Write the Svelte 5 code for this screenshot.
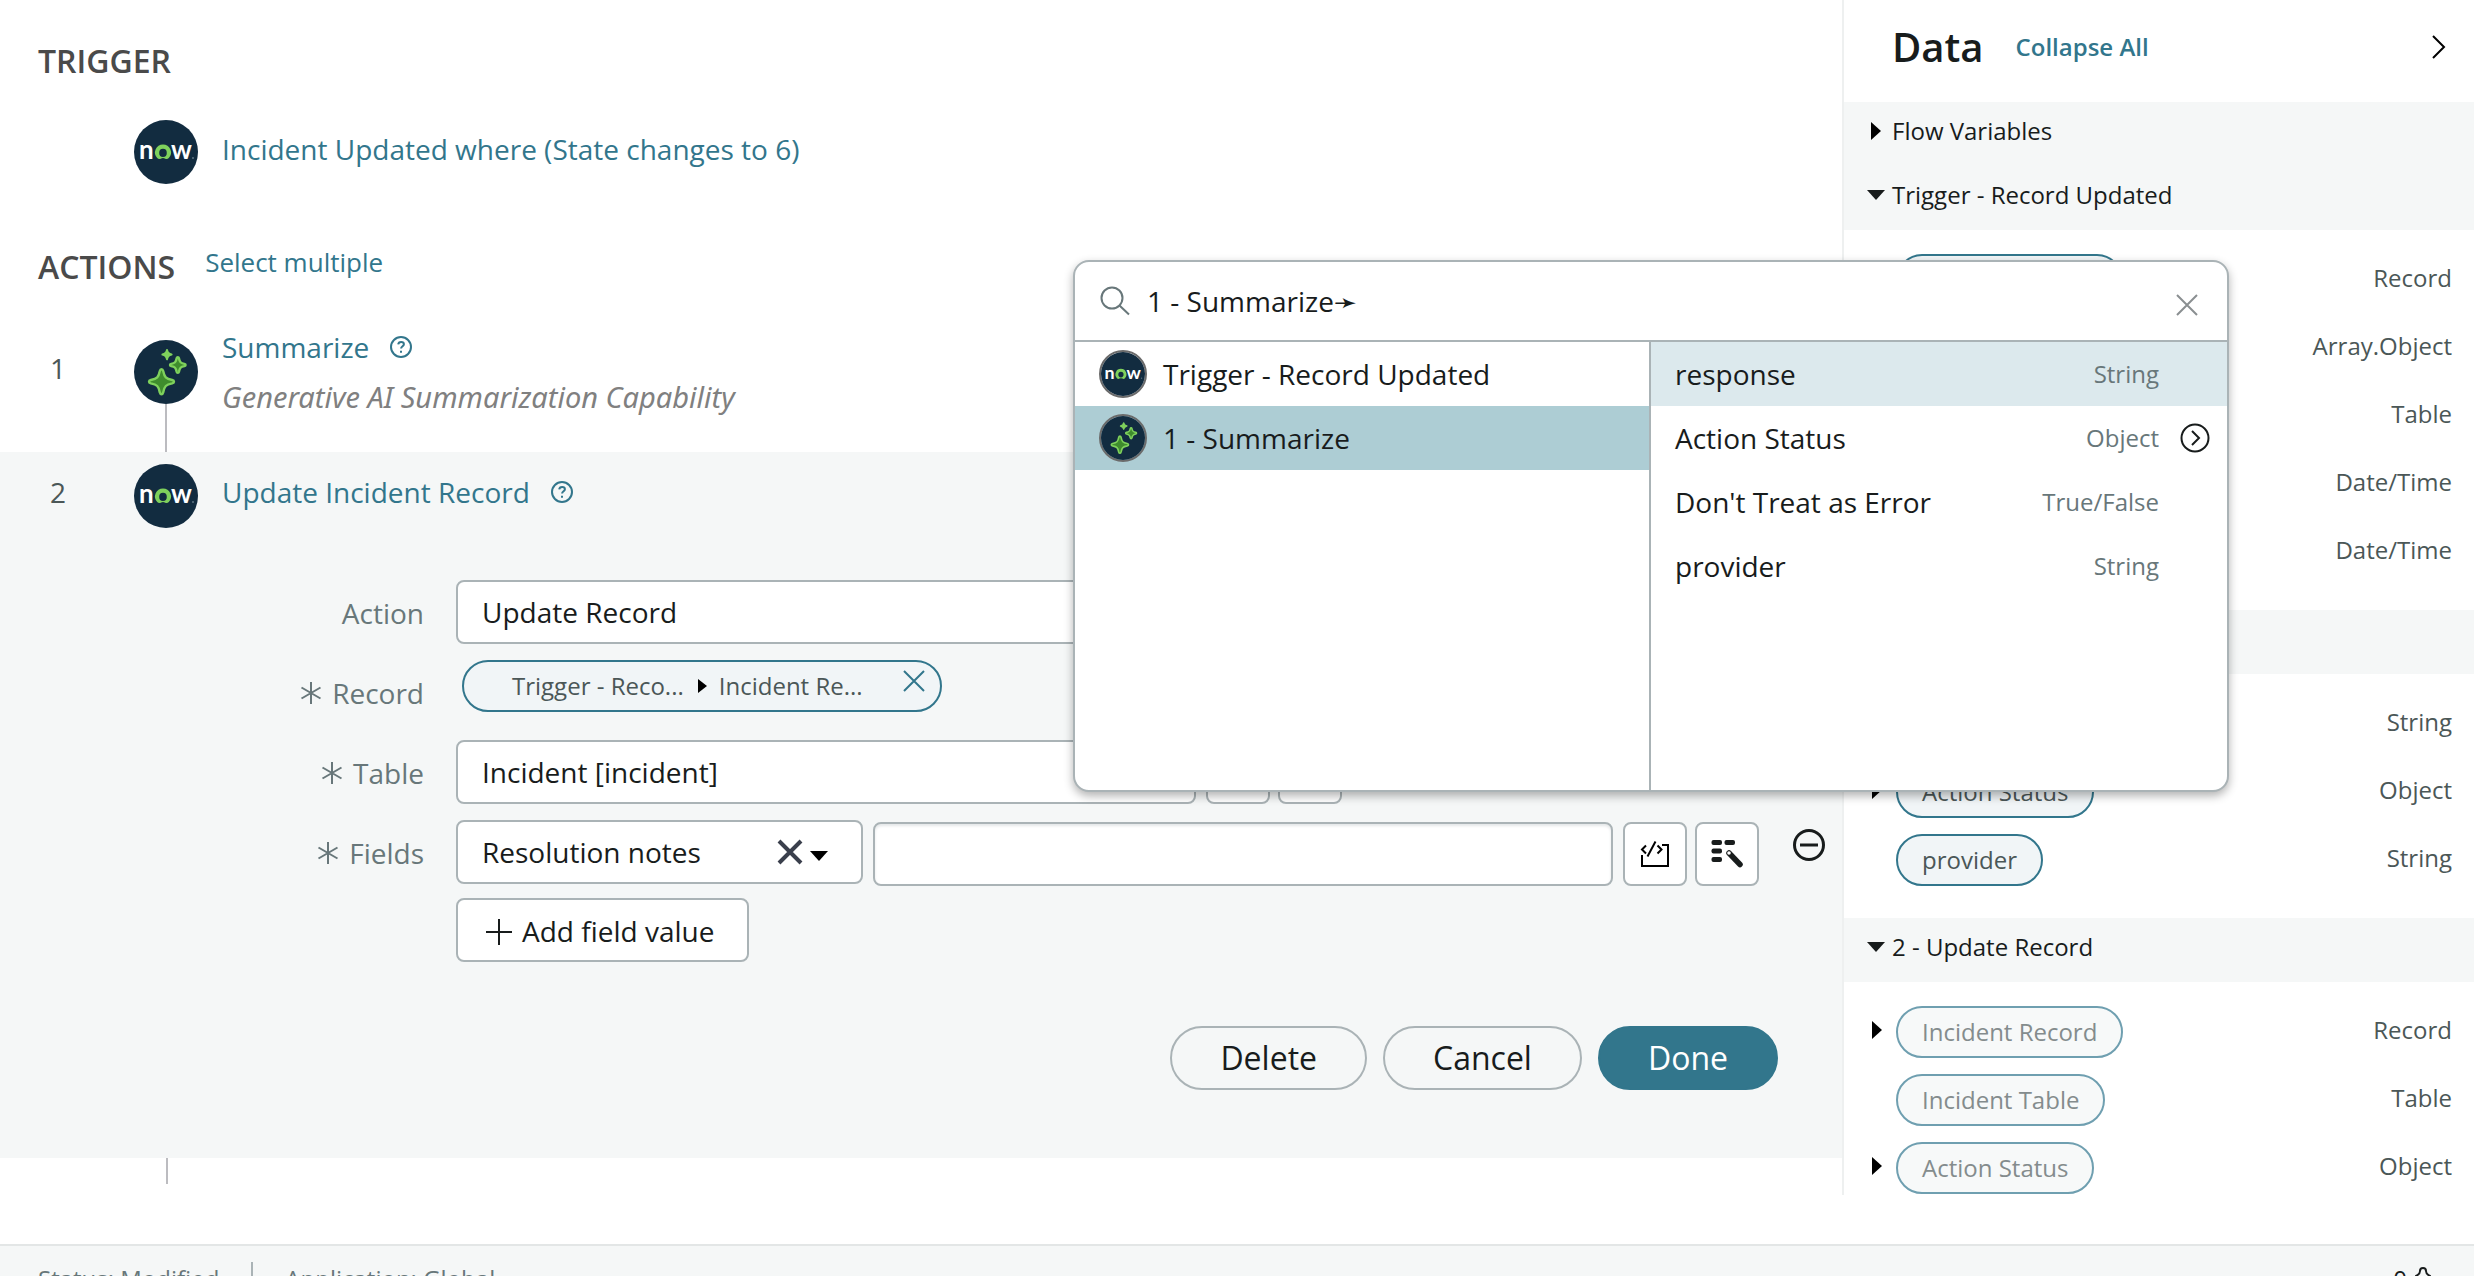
<script>
  const variables = [
    {
      title: 'Trigger - Record Updated',
      muted: false,
      items: [
        { name: 'Incident Record', type: 'Record', nested: true },
        { name: 'Changed Fields', type: 'Array.Object', nested: true },
        { name: 'Incident Table', type: 'Table', nested: false },
        { name: 'Run Start Time', type: 'Date/Time', nested: false },
        { name: 'Run Start Date', type: 'Date/Time', nested: false }
      ]
    },
    {
      title: '1 - Summarize',
      muted: false,
      items: [
        { name: 'response', type: 'String', nested: false },
        { name: 'Action Status', type: 'Object', nested: true },
        { name: 'provider', type: 'String', nested: false }
      ]
    },
    {
      title: '2 - Update Record',
      muted: true,
      items: [
        { name: 'Incident Record', type: 'Record', nested: true },
        { name: 'Incident Table', type: 'Table', nested: false },
        { name: 'Action Status', type: 'Object', nested: true }
      ]
    }
  ];

  const outputs = [
    { name: 'response', type: 'String' },
    { name: 'Action Status', type: 'Object', nested: true },
    { name: "Don't Treat as Error", type: 'True/False' },
    { name: 'provider', type: 'String' }
  ];

  let query = $state('1 - Summarize➛');
  let note = $state('');
</script>

{#snippet nowLogo()}
  <svg class="badge" viewBox="0 0 64 64" role="img" aria-label="now">
    <circle cx="32" cy="32" r="32" fill="#122c40" />
    <text class="logo-text" x="5" y="39">n</text>
    <path
      fill="#7fd15c"
      fill-rule="evenodd"
      d="M29 24.500a8 8 0 0 1 5.800 13.500q-1.500 1.800-3.600.7a4.500 4.500 0 0 0-4.400 0q-2.100 1.100-3.600-.7A8 8 0 0 1 29 24.500zm0 4.300a3.800 4.100 0 1 0 0 8.200a3.800 4.100 0 1 0 0-8.200z"
    />
    <text class="logo-text" x="37" y="39">w</text>
    <circle cx="59" cy="38" r="1" fill="#5f7483" />
  </svg>
{/snippet}

{#snippet sparkLogo()}
  <svg class="badge" viewBox="0 0 64 64" aria-hidden="true">
    <circle cx="32" cy="32" r="32" fill="#122c40" />
    <g fill="#3f8c2d" stroke="#7fd15c" stroke-width="2.400" stroke-linejoin="round">
      <path d="M27.500 29.200c1 0 1.400.6 1.700 1.800 1.300 6.400 2.600 7.700 9 9 1.200.3 1.800.7 1.800 1.700s-.6 1.400-1.800 1.700c-6.400 1.300-7.700 2.600-9 9-.3 1.200-.7 1.800-1.700 1.800s-1.400-.6-1.700-1.800c-1.300-6.400-2.600-7.700-9-9-1.200-.3-1.800-.7-1.800-1.700s.6-1.400 1.800-1.700c6.400-1.300 7.700-2.600 9-9 .3-1.200.7-1.800 1.700-1.800z" />
      <path d="M43.800 17.200c.7 0 1 .4 1.200 1.200.8 3.800 1.600 4.600 5.400 5.400.8.200 1.200.5 1.200 1.200s-.4 1-1.200 1.200c-3.800.8-4.600 1.600-5.400 5.400-.2.800-.5 1.200-1.200 1.200s-1-.4-1.200-1.200c-.8-3.800-1.600-4.600-5.400-5.400-.8-.2-1.200-.5-1.200-1.200s.4-1 1.200-1.200c3.800-.8 4.600-1.600 5.400-5.400.2-.8.500-1.200 1.200-1.200z" />
      <path fill="#7fd15c" stroke-width="2" d="M33 10c.5 2.800 1.500 3.900 4.600 4.600-3.100.7-4.100 1.800-4.600 4.600-.5-2.800-1.500-3.900-4.600-4.600 3.100-.7 4.100-1.800 4.600-4.600z" />
    </g>
  </svg>
{/snippet}

{#snippet help()}
  <button class="help" type="button" aria-label="Help">
    <svg width="24" height="24" viewBox="0 0 24 24" fill="none" stroke="currentColor" stroke-width="2">
      <circle cx="12" cy="12" r="10" />
      <path d="M9.200 9.400c.2-1.700 1.300-2.500 2.900-2.500 1.700 0 2.800.9 2.800 2.300 0 2.100-2.800 2.100-2.800 4.400" />
      <path d="M12 15.800v2" />
    </svg>
  </button>
{/snippet}

{#snippet star()}
  <svg class="star" width="22" height="22" viewBox="0 0 22 22" stroke="currentColor" stroke-width="2" aria-label="required">
    <path d="M11 0v22M1.500 5.500l19 11M1.500 16.500l19-11" />
  </svg>
{/snippet}

{#snippet cross(size)}
  <svg width={size} height={size} viewBox="0 0 22 22" stroke="currentColor" stroke-width="2" aria-hidden="true">
    <path d="M1 1l20 20M21 1L1 21" />
  </svg>
{/snippet}

{#snippet scriptIcon()}
  <svg width="60" height="60" viewBox="2 2 60 60" fill="none" stroke="#000" stroke-width="2" aria-hidden="true">
    <path d="M19 33v11h26v-21h-6" />
    <path d="M23 23.500l-4 4 4 4M34.500 23.500l4 4-4 4M32.500 19.500l-8 15" />
  </svg>
{/snippet}

{#snippet wandIcon()}
  <svg width="60" height="60" viewBox="2 2 60 60" fill="#181c1c" aria-hidden="true">
    <rect x="16.500" y="18" width="10.500" height="5" rx="2" />
    <rect x="29.500" y="18" width="10.500" height="5" rx="2" />
    <rect x="16.500" y="26.500" width="10.500" height="5" rx="2" />
    <rect x="16.500" y="35" width="10.500" height="5" rx="2" />
    <path d="M34 31l11 11.500" stroke="#181c1c" stroke-width="5.500" stroke-linecap="round" />
    <circle cx="34" cy="31" r="1.800" fill="#fff" />
  </svg>
{/snippet}

<div class="page">
  <div class="workspace">
    <main class="flow">
      <h2 class="heading">TRIGGER</h2>
      <div class="step trigger">
        <span class="num"></span>
        <div class="mark">{@render nowLogo()}</div>
        <div class="info"><a class="title" href="#trigger">Incident Updated where (State changes to 6)</a></div>
      </div>

      <div class="actions-head">
        <h2>ACTIONS</h2>
        <a href="#select">Select multiple</a>
      </div>

      <div class="step noted">
        <span class="num">1</span>
        <div class="mark">{@render sparkLogo()}<i class="line"></i></div>
        <div class="info">
          <div class="title-row"><a class="title" href="#summarize">Summarize</a>{@render help()}</div>
          <p class="note">Generative AI Summarization Capability</p>
        </div>
      </div>

      <section class="editor">
        <div class="step">
          <span class="num">2</span>
          <div class="mark">{@render nowLogo()}</div>
          <div class="info">
            <div class="title-row"><a class="title" href="#update">Update Incident Record</a>{@render help()}</div>
          </div>
        </div>

        <form class="form">
          <div class="row">
            <label for="action">Action</label>
            <select id="action" class="box wide"><option>Update Record</option></select>
          </div>
          <div class="row">
            <span class="label">{@render star()}Record</span>
            <div class="chip">
              <span>Trigger - Reco...</span>
              <svg width="9" height="14" viewBox="0 0 9 14" aria-hidden="true"><path d="M0 0l9 7-9 7z" /></svg>
              <span>Incident Re...</span>
              <button type="button" aria-label="Remove record">{@render cross(22)}</button>
            </div>
          </div>
          <div class="row">
            <label for="table">{@render star()}Table</label>
            <div class="controls">
              <select id="table" class="box wide"><option>Incident [incident]</option></select>
              <div class="tools">
                <button class="tool" type="button" aria-label="Script">{@render scriptIcon()}</button>
                <button class="tool" type="button" aria-label="Pick data">{@render wandIcon()}</button>
              </div>
            </div>
          </div>
          <div class="row">
            <label for="field">{@render star()}Fields</label>
            <div class="controls grow">
              <div class="field-pick">
                <select id="field" class="box"><option>Resolution notes</option></select>
                <button class="clear" type="button" aria-label="Clear field">
                  <svg width="26" height="26" viewBox="0 0 26 26" stroke="#3a3f4c" stroke-width="4"><path d="M2 2l22 22M24 2L2 24" /></svg>
                </button>
                <svg class="caret" width="18" height="10" viewBox="0 0 18 10" aria-hidden="true"><path d="M0 0h18l-9 10z" /></svg>
              </div>
              <input class="box value" aria-label="Field value" bind:value={note} />
              <div class="tools">
                <button class="tool" type="button" aria-label="Script">{@render scriptIcon()}</button>
                <button class="tool" type="button" aria-label="Pick data">{@render wandIcon()}</button>
              </div>
              <button class="remove" type="button" aria-label="Remove field">
                <svg width="32" height="32" viewBox="0 0 32 32" fill="none" stroke="#181c1c" stroke-width="3">
                  <circle cx="16" cy="16" r="14.500" /><path d="M7 16h18" />
                </svg>
              </button>
            </div>
          </div>
          <button class="box add" type="button">
            <svg width="26" height="28" viewBox="0 0 26 28" stroke="#181c1c" stroke-width="2" aria-hidden="true"><path d="M13 2v26M0 15h26" /></svg>
            Add field value
          </button>
          <div class="submit">
            <button class="pill" type="button">Delete</button>
            <button class="pill" type="button">Cancel</button>
            <button class="pill primary" type="button">Done</button>
          </div>
        </form>
      </section>
      <i class="line tail"></i>
    </main>

    <aside class="data">
      <header class="data-head">
        <h1>Data</h1>
        <a href="#collapse">Collapse All</a>
        <button type="button" aria-label="Hide panel">
          <svg width="14" height="24" viewBox="0 0 14 24" fill="none" stroke="#000" stroke-width="2"><path d="M1 1l11 11L1 23" /></svg>
        </button>
      </header>
      <button class="group" type="button">
        <span class="arrow"><svg width="10" height="18" viewBox="0 0 10 18"><path d="M0 0l10 9-10 9z" /></svg></span>
        Flow Variables
      </button>
      {#each variables as group}
        <button class="group" type="button">
          <span class="arrow"><svg width="18" height="10" viewBox="0 0 18 10"><path fill="#181c1c" d="M0 0h18l-9 10z" /></svg></span>
          {group.title}
        </button>
        <ul class="vars" class:muted={group.muted}>
          {#each group.items as item}
            <li>
              <span class="arrow">
                {#if item.nested}<svg width="10" height="18" viewBox="0 0 10 18"><path d="M0 0l10 9-10 9z" /></svg>{/if}
              </span>
              <span class="var">{item.name}</span>
              <span class="type">{item.type}</span>
            </li>
          {/each}
        </ul>
      {/each}
    </aside>

    <div class="picker" role="dialog" aria-label="Data picker">
      <div class="search">
        <svg width="30" height="30" viewBox="0 0 30 30" fill="none" stroke="#68777a" stroke-width="2" aria-hidden="true">
          <circle cx="12" cy="12" r="10.500" /><path d="M19.500 19.500l9.500 9" />
        </svg>
        <input aria-label="Search data" bind:value={query} />
        <button type="button" aria-label="Close">{@render cross(22)}</button>
      </div>
      <div class="columns">
        <div class="sources">
          <button type="button"><span class="mini">{@render nowLogo()}</span>Trigger - Record Updated</button>
          <button type="button" class="selected"><span class="mini">{@render sparkLogo()}</span>1 - Summarize</button>
        </div>
        <div class="outputs">
          {#each outputs as output, i}
            <button type="button" class:hovered={i === 0}>
              <span>{output.name}</span>
              <span class="kind">{output.type}</span>
              <span class="more">
                {#if output.nested}
                  <svg width="30" height="30" viewBox="0 0 30 30" fill="none" stroke="#181c1c" stroke-width="2">
                    <circle cx="15" cy="15" r="13.500" /><path d="M12 8l7 7-7 7" />
                  </svg>
                {/if}
              </span>
            </button>
          {/each}
        </div>
      </div>
    </div>
  </div>

  <footer class="status">
    <span>Status: Modified</span>
    <i></i>
    <span>Application: Global</span>
    <span class="count">
      0
      <svg width="16" height="24" viewBox="0 0 16 24" fill="none" stroke="#181c1c" stroke-width="2">
        <path d="M1 22V9q4-2 4-5a3 3 0 1 1 6 0q0 3 4 5v13z" />
      </svg>
    </span>
  </footer>
</div>

<style>
  :global(body) {
    background: #fff;
    overflow: hidden;
  }
  .page {
    height: 100vh;
    overflow: hidden;
    font-family: 'Open Sans', 'Noto Sans', 'DejaVu Sans', sans-serif;
    font-size: 28px;
    line-height: 40px;
    color: #181c1c;
  }
  .page *,
  .page *::before {
    box-sizing: border-box;
  }
  svg {
    display: block;
    flex: none;
  }
  h1,
  h2,
  p,
  ul {
    margin: 0;
    padding: 0;
  }
  button,
  input,
  select {
    font: inherit;
    color: inherit;
    margin: 0;
    padding: 0;
    border: 0;
    background: none;
    border-radius: 0;
    text-align: left;
  }
  a {
    color: #32768c;
    text-decoration: none;
  }
  .workspace {
    position: relative;
    display: flex;
    height: calc(100vh - 81px);
  }
  .flow {
    flex: 1;
    min-width: 0;
    padding-top: 39px;
    overflow: hidden;
  }
  h2 {
    font-size: 32px;
    line-height: 44px;
    font-weight: 600;
    color: #4a4a4a;
  }
  .heading {
    padding-left: 38px;
  }

  .step {
    display: flex;
  }
  .trigger {
    margin-top: 37px;
  }
  .num {
    width: 134px;
    padding: 8px 18px 0 0;
    text-align: center;
    color: #4b5757;
  }
  .mark {
    display: flex;
    flex-direction: column;
    align-items: center;
    width: 64px;
    margin-right: 24px;
  }
  .badge {
    width: 64px;
    height: 64px;
  }
  .logo-text {
    font-family: Lato, sans-serif;
    font-size: 26px;
    font-weight: 700;
    fill: #fff;
  }
  .info {
    padding-top: 8px;
  }
  .trigger .info {
    padding-top: 9px;
  }
  .title-row {
    display: flex;
    align-items: center;
    gap: 20px;
  }
  .help {
    color: #32768c;
  }
  .actions-head {
    display: flex;
    align-items: flex-start;
    gap: 30px;
    margin-top: 61px;
    padding-left: 38px;
  }
  .actions-head a {
    font-size: 26px;
    line-height: 34px;
  }
  .noted {
    margin-top: 38px;
  }
  .noted .num {
    padding-top: 21px;
  }
  .noted .mark {
    padding-top: 13px;
  }
  .noted .info {
    padding: 0 0 35px;
  }
  .note {
    margin-top: 10px;
    font-family: 'Noto Sans', 'Open Sans', sans-serif;
    font-size: 29px;
    font-style: italic;
    color: #808080;
  }
  .line {
    flex: 1;
    width: 2px;
    background: #bcbcc0;
  }
  .tail {
    display: block;
    height: 26px;
    margin-left: 166px;
  }

  .editor {
    padding: 12px 0 68px;
    background: #f5f7f7;
  }
  .form {
    display: flex;
    flex-direction: column;
    gap: 16px;
    margin-top: 52px;
  }
  .row {
    display: flex;
    align-items: flex-start;
    height: 64px;
  }
  .row > label,
  .label {
    display: flex;
    align-items: center;
    justify-content: flex-end;
    gap: 10px;
    flex: none;
    width: 424px;
    height: 64px;
    margin-right: 32px;
    padding-top: 2px;
    color: #68777a;
  }
  .box {
    display: block;
    height: 64px;
    padding: 0 24px;
    border: 2px solid #aab3b6;
    border-radius: 8px;
    background: #fff;
    color: #181c1c;
    appearance: none;
  }
  .wide {
    width: 740px;
  }
  .chip {
    display: flex;
    align-items: center;
    height: 52px;
    margin-left: 6px;
    padding: 0 15px 0 48px;
    border: 2px solid #32768c;
    border-radius: 26px;
    background: #f1f5f7;
    font-size: 24px;
    color: #4b5757;
  }
  .chip > svg {
    margin: 0 12px 0 14px;
  }
  .chip button {
    margin: 0 0 10px 40px;
    color: #32768c;
  }
  .controls {
    display: flex;
    gap: 10px;
  }
  .grow {
    flex: 1;
    padding-right: 17px;
  }
  .tools {
    display: flex;
    gap: 8px;
  }
  .tool {
    width: 64px;
    height: 64px;
    border: 2px solid #aab3b6;
    border-radius: 8px;
    background: #fff;
  }
  .grow > .value,
  .grow > .tools {
    margin-top: 2px;
  }
  .field-pick {
    position: relative;
    flex: none;
    width: 407px;
  }
  .field-pick .box {
    width: 100%;
  }
  .clear {
    position: absolute;
    top: 19px;
    right: 60px;
  }
  .caret {
    position: absolute;
    top: 31px;
    right: 35px;
  }
  .value {
    flex: 1;
    min-width: 0;
    box-shadow: inset 0 2px 3px #e4e7e8;
  }
  .remove {
    align-self: flex-start;
    margin: 9px 0 0 24px;
  }
  .add {
    display: flex;
    align-items: center;
    align-self: flex-start;
    gap: 10px;
    margin: -2px 0 0 456px;
    padding: 2px 33px 0 28px;
  }
  .submit {
    display: flex;
    justify-content: flex-end;
    gap: 16px;
    margin-top: 48px;
    padding-right: 64px;
  }
  .pill {
    height: 64px;
    padding: 0 48px;
    border: 2px solid #aab3b6;
    border-radius: 32px;
    font-size: 32px;
  }
  .primary {
    border-color: #32768c;
    background: #32768c;
    color: #fff;
  }

  .data {
    flex: none;
    width: 632px;
    border-left: 2px solid #eef0f0;
    overflow: hidden;
    font-size: 24px;
  }
  .data-head {
    display: flex;
    align-items: center;
    height: 102px;
    padding: 0 28px 8px 48px;
  }
  h1 {
    font-size: 40px;
    line-height: 56px;
    font-weight: 600;
  }
  .data-head a {
    margin-left: 32px;
    font-weight: 600;
  }
  .data-head button {
    margin-left: auto;
  }
  .group {
    display: flex;
    align-items: center;
    width: 100%;
    height: 64px;
    padding: 0 0 6px 18px;
    background: #f5f7f7;
  }
  .arrow {
    display: flex;
    flex: none;
    justify-content: center;
    width: 30px;
  }
  .group .arrow {
    padding-right: 2px;
  }
  .vars {
    display: flex;
    flex-direction: column;
    gap: 16px;
    padding: 24px 22px 32px 18px;
    list-style: none;
  }
  .vars li {
    display: flex;
    align-items: center;
    height: 52px;
  }
  .vars .arrow {
    padding-bottom: 4px;
  }
  .var {
    display: flex;
    align-items: center;
    height: 52px;
    margin-left: 4px;
    padding: 0 24px;
    border: 2px solid #32768c;
    border-radius: 26px;
    background: #f1f5f7;
    color: #4b5757;
  }
  .muted .var {
    border-color: #6f9fb0;
    background: #f7f9f9;
    color: #848c8d;
  }
  .type {
    margin-left: auto;
    padding-bottom: 4px;
    color: #4b5757;
  }

  .picker {
    position: absolute;
    top: 260px;
    right: 245px;
    display: flex;
    flex-direction: column;
    width: 1156px;
    height: 532px;
    border: 2px solid #aab3b6;
    border-radius: 16px;
    background: #fff;
    box-shadow: 0 4px 10px rgba(0, 0, 0, 0.3);
    overflow: hidden;
  }
  .search {
    display: flex;
    align-items: center;
    flex: none;
    height: 80px;
    padding: 0 29px 0 25px;
    border-bottom: 2px solid #aab3b6;
  }
  .search input {
    flex: 1;
    min-width: 0;
    height: 60px;
    margin-left: 17px;
    outline: none;
  }
  .search button {
    padding-top: 8px;
    color: #8a8f91;
  }
  .columns {
    display: flex;
    flex: 1;
  }
  .sources {
    width: 576px;
    border-right: 2px solid #aab3b6;
  }
  .outputs {
    flex: 1;
  }
  .columns button {
    display: flex;
    align-items: center;
    width: 100%;
    height: 64px;
    padding-left: 24px;
  }
  .mini {
    margin-right: 16px;
    border: 2px solid #6b6b6b;
    border-radius: 50%;
  }
  .mini :global(.badge) {
    width: 44px;
    height: 44px;
  }
  .selected {
    background: #adcdd4;
  }
  .hovered {
    background: #dce9ed;
  }
  .kind {
    margin-left: auto;
    font-size: 24px;
    color: #68777a;
  }
  .more {
    width: 68px;
    padding-left: 21px;
  }

  .status {
    display: flex;
    align-items: center;
    height: 68px;
    margin-top: 49px;
    padding: 0 43px 0 38px;
    border-top: 2px solid #e3e6e6;
    background: #f5f7f7;
    font-size: 24px;
    color: #68777a;
  }
  .status i {
    width: 2px;
    height: 34px;
    margin: 0 32px;
    background: #aab3b6;
  }
  .count {
    display: flex;
    align-items: center;
    gap: 8px;
    margin-left: auto;
    color: #181c1c;
  }
</style>
